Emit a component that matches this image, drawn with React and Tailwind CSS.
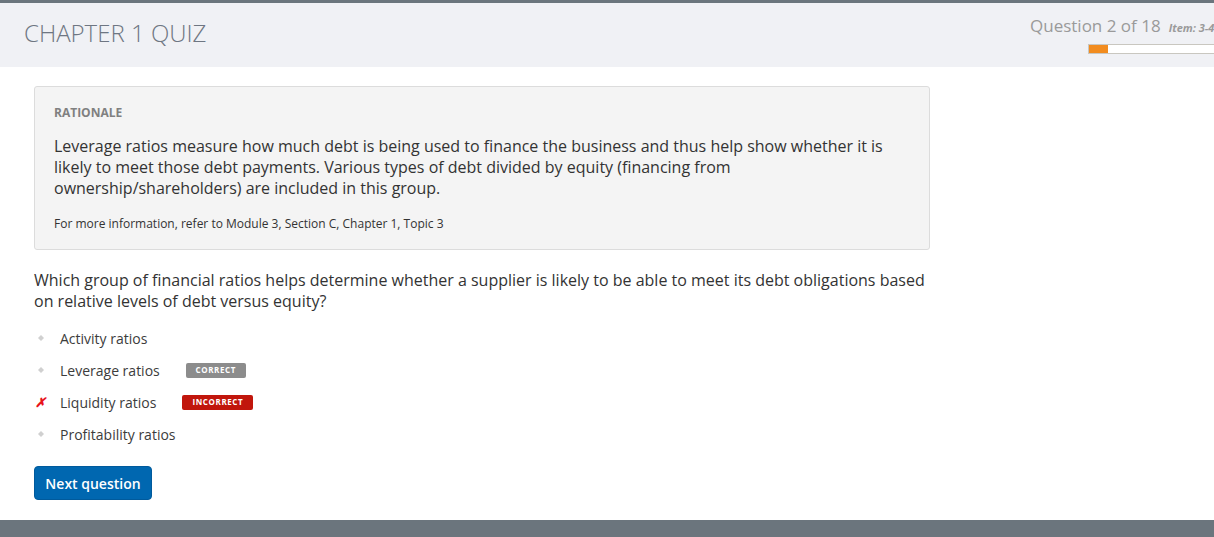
import React from 'react';

const options = [
  { label: 'Activity ratios' },
  { label: 'Leverage ratios', badge: 'correct' },
  { label: 'Liquidity ratios', badge: 'incorrect', wrong: true },
  { label: 'Profitability ratios' },
];

function Bullet() {
  return (
    <svg width="8" height="8" viewBox="0 0 8 8" className="block">
      <path d="M4 1 L7 4 L4 7 L1 4 Z" fill="#d0d0d0" />
    </svg>
  );
}

export default function App() {
  return (
    <div className="min-h-[537px] flex flex-col bg-white text-[#333] font-['Open_Sans',sans-serif]">
      <header className="h-[67px] border-t-[3px] border-[#6b757d] bg-[#f0f1f5] flex justify-between overflow-hidden">
        <h1 className="pl-[24px] pt-[15px] text-[24px] font-light leading-[30px] text-[#6e7682]">CHAPTER 1 QUIZ</h1>
        <div className="flex flex-col items-start pt-[12px] -mr-[40px] w-[224px] shrink-0">
          <div className="flex items-baseline gap-[8px] whitespace-nowrap">
            <span className="text-[17px] leading-[22px] text-[#9a9a9a]">Question 2 of 18</span>
            <span className="text-[11px] italic font-bold text-[#9a9a9a]">Item: 3-4</span>
          </div>
          <div className="ml-[58px] mt-[7px] h-[10px] w-[170px] border border-[#c9c7c0] bg-white">
            <div className="h-full w-[19px] bg-[#f28c1f]" />
          </div>
        </div>
      </header>

      <main className="flex-1 pl-[34px] pt-[19px] pb-[20px]">
        <div className="w-[896px]">
          <section className="rounded-[3px] border border-[#dcdcdc] bg-[#f4f4f4] px-[19px] pt-[17px] pb-[16px]">
            <h2 className="text-[12px] font-bold leading-[18px] text-[#808080]">RATIONALE</h2>
            <p className="mt-[14px] text-[16px] leading-[21px] text-[#333]">
              Leverage ratios measure how much debt is being used to finance the business and thus help show whether it is likely to meet those debt payments. Various types of debt divided by equity (financing from ownership/shareholders) are included in this group.
            </p>
            <p className="mt-[16px] text-[12px] leading-[18px] text-[#333]">
              For more information, refer to Module 3, Section C, Chapter 1, Topic 3
            </p>
          </section>

          <p className="mt-[20px] text-[16px] leading-[21px] text-[#333]">
            Which group of financial ratios helps determine whether a supplier is likely to be able to meet its debt obligations based on relative levels of debt versus equity?
          </p>

          <ul className="mt-[10px] flex flex-col">
            {options.map((o) => (
              <li key={o.label} className="flex items-center h-[32px] text-[14px]">
                <span className="w-[26px] flex justify-start pl-[1px]">
                  {o.wrong ? (
                    <span className="text-[#e8141a] font-bold italic text-[13px] leading-none">✗</span>
                  ) : (
                    <span className="pl-[2px]"><Bullet /></span>
                  )}
                </span>
                <span className="text-[#3c3c3c]">{o.label}</span>
                {o.badge === 'correct' && (
                  <span className="ml-[26px] h-[15px] w-[60px] rounded-[2px] bg-[#8c8c8c] text-white text-[8px] font-bold tracking-[0.6px] flex items-center justify-center">CORRECT</span>
                )}
                {o.badge === 'incorrect' && (
                  <span className="ml-[26px] h-[15px] w-[71px] rounded-[2px] bg-[#c1160c] text-white text-[8px] font-bold tracking-[0.6px] flex items-center justify-center">INCORRECT</span>
                )}
              </li>
            ))}
          </ul>

          <button className="mt-[16px] h-[34px] w-[118px] rounded-[4px] border border-[#005a9c] bg-[#0067b0] text-[14px] font-semibold text-white">
            Next question
          </button>
        </div>
      </main>

      <footer className="h-[17px] bg-[#6b757d]" />
    </div>
  );
}
